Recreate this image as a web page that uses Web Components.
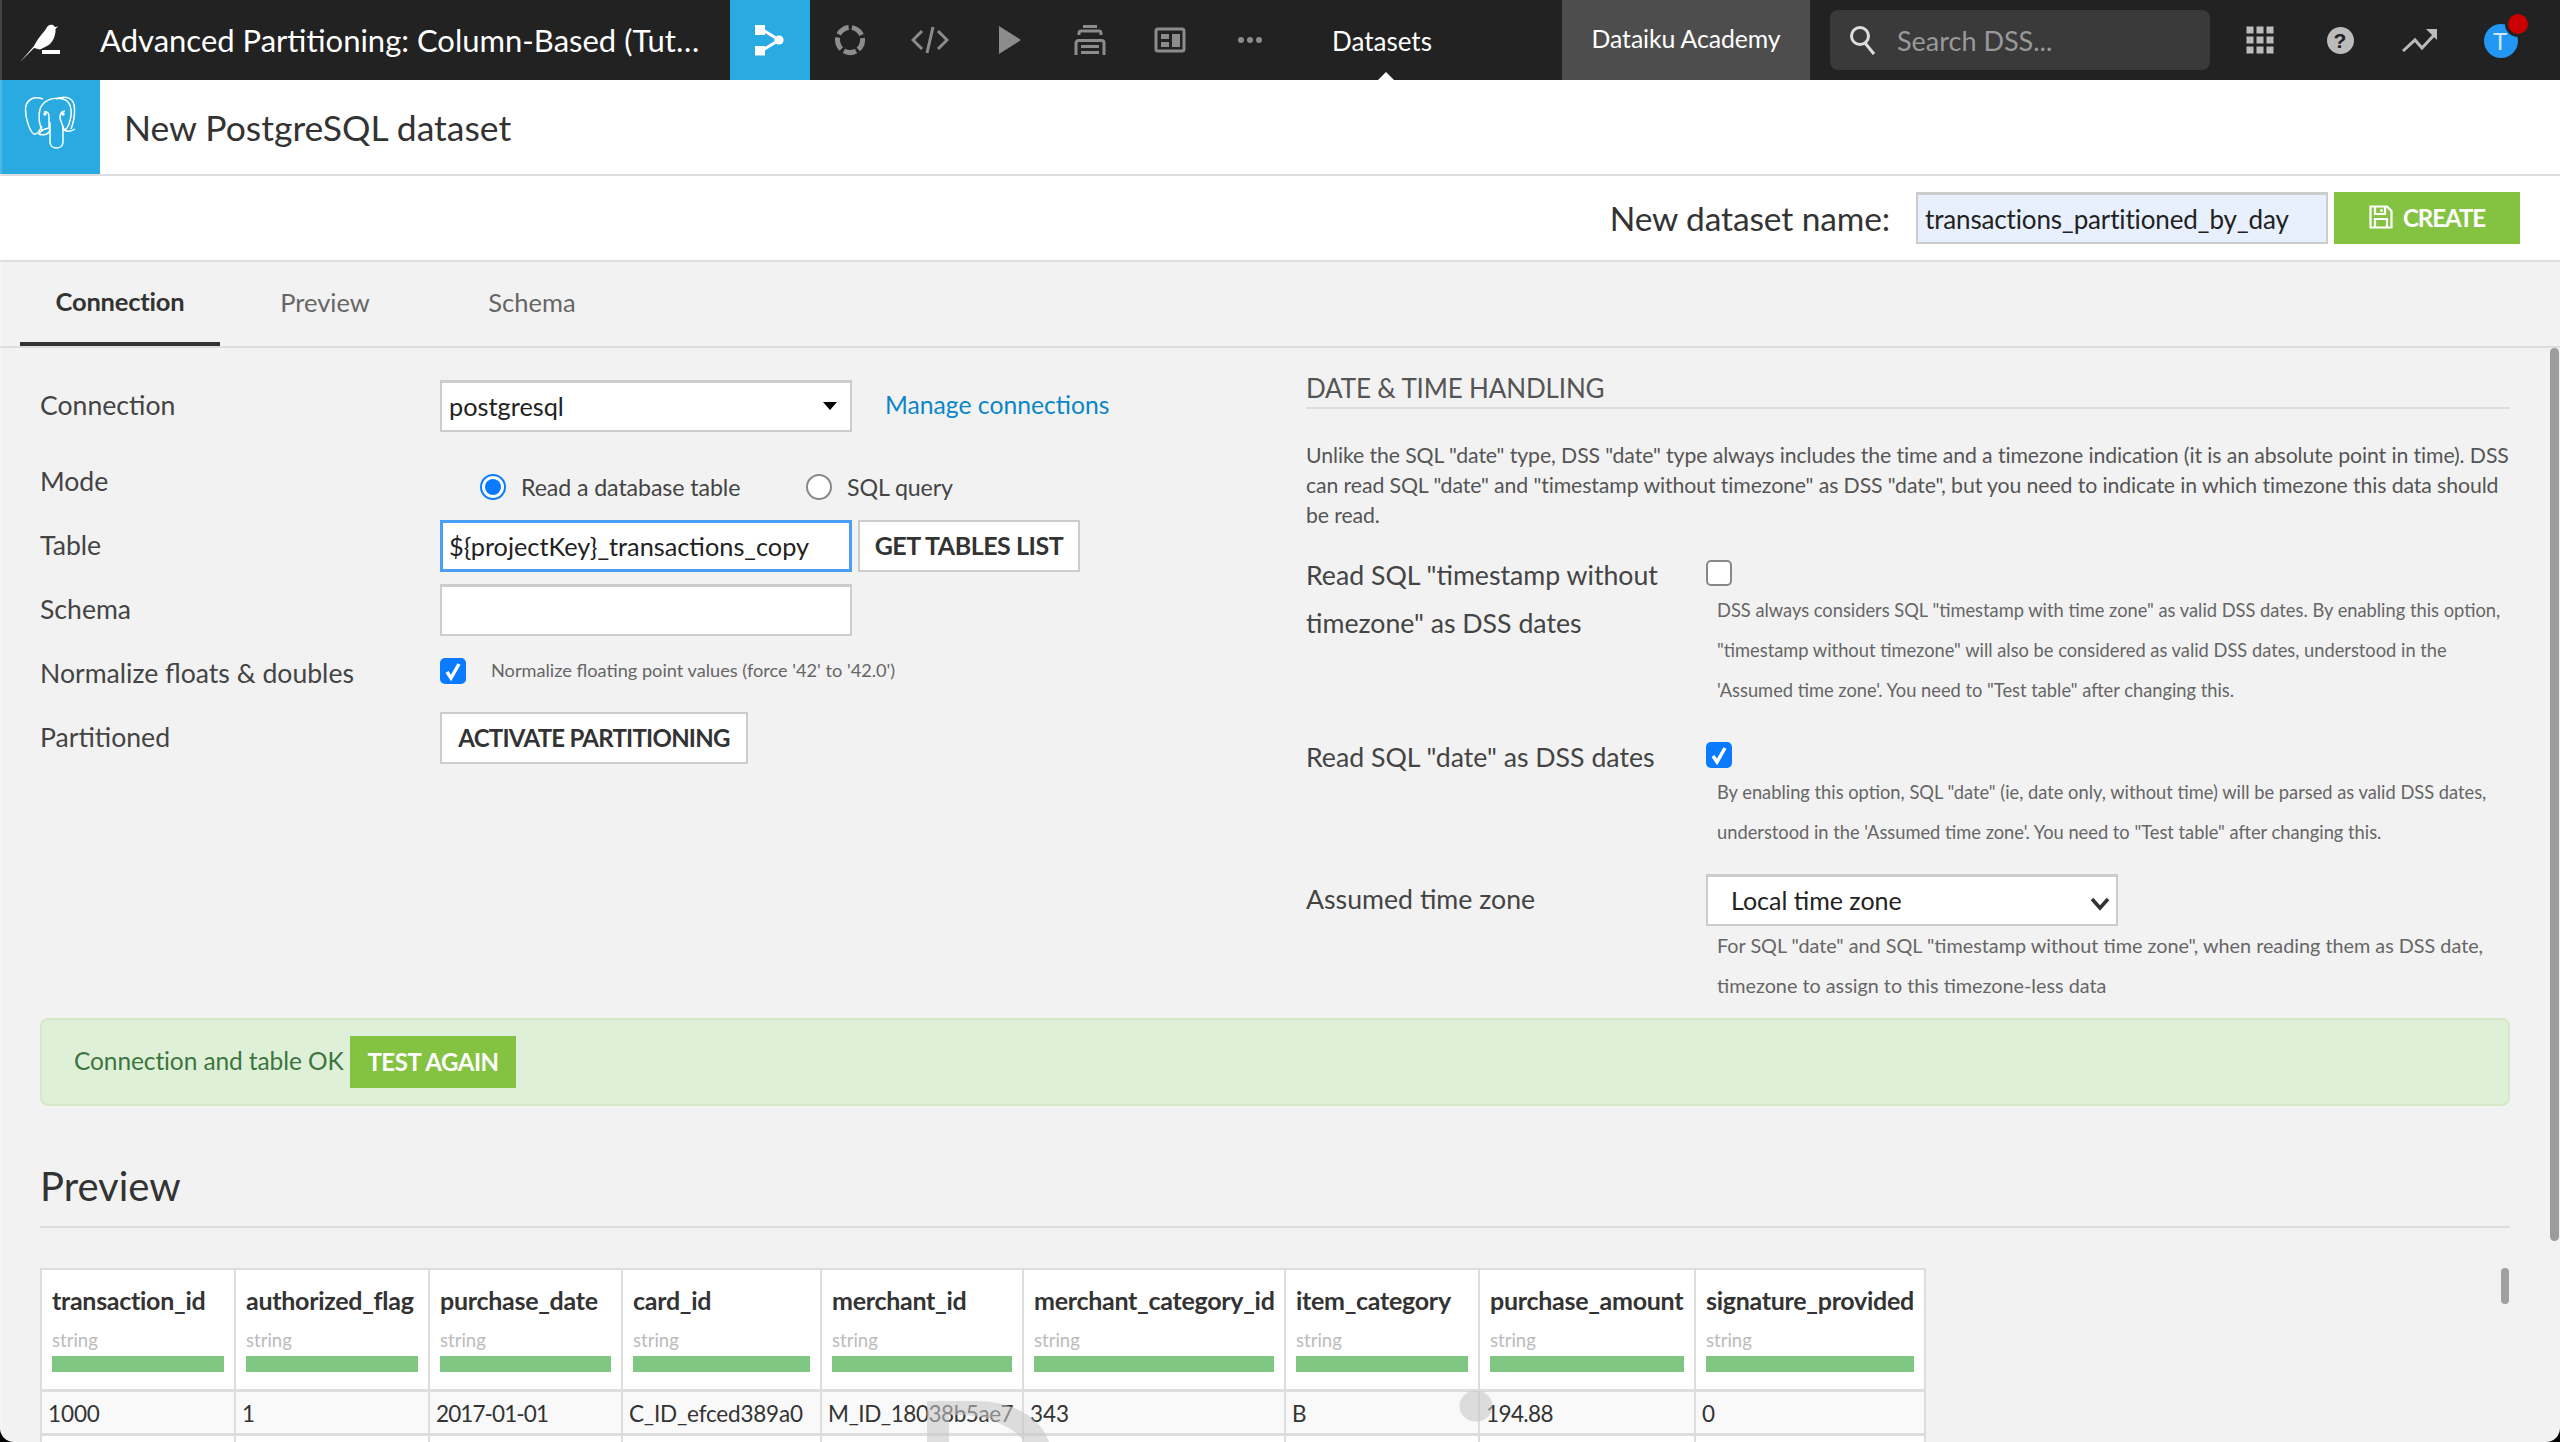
<!DOCTYPE html>
<html lang="en"><head><meta charset="utf-8"><title>New PostgreSQL dataset</title>
<style>
html,body{margin:0;padding:0;background:#000;}
body{width:2560px;height:1442px;overflow:hidden;font-family:Lato,"Liberation Sans",sans-serif;color:#333;}
</style></head><body>
<dss-app>
  <dss-topbar></dss-topbar>
  <dss-page-title>New PostgreSQL dataset</dss-page-title>
  <dss-name-bar></dss-name-bar>
  <dss-tabs></dss-tabs>
  <dss-columns>
    <dss-left-form slot="left"></dss-left-form>
    <dss-right-form slot="right"></dss-right-form>
  </dss-columns>
  <dss-alert></dss-alert>
  <dss-section-title>Preview</dss-section-title>
  <dss-preview-table></dss-preview-table>
  <dss-ghost-mark></dss-ghost-mark>
  <dss-scrollbars></dss-scrollbars>
</dss-app>
<script>
const BASE=`*,:host{box-sizing:border-box}`;
function el(name,css,html){
  customElements.define(name,class extends HTMLElement{
    connectedCallback(){
      if(this.shadowRoot)return;
      const r=this.attachShadow({mode:'open'});
      const h=typeof html==='function'?html(this):html;
      r.innerHTML=`<style>${BASE}${css}</style>${h}`;
    }
  });
}
const G='#8c8c8c';
const ICONS=[
 `<svg width="34" height="32" viewBox="0 0 34 32"><rect x="2" y="1" width="10" height="10" fill="#fff"/><rect x="2" y="22" width="10" height="9.5" fill="#fff"/><circle cx="26" cy="16" r="4.6" fill="#fff"/><path d="M10 6 26 16 10 26" fill="none" stroke="#fff" stroke-width="3"/></svg>`,
 `<svg width="32" height="32" viewBox="0 0 32 32"><circle cx="16" cy="16" r="12.5" fill="none" stroke="${G}" stroke-width="5" stroke-dasharray="12.5 3.2" transform="rotate(61.3 16 16)"/></svg>`,
 `<svg width="38" height="28" viewBox="0 0 38 28" fill="none" stroke="${G}" stroke-width="3"><path d="M11 5 2 14 11 23M27 5 36 14 27 23M22 1 16 27"/></svg>`,
 `<svg width="24" height="30" viewBox="0 0 24 30"><path d="M1 1 23 15 1 29Z" fill="${G}"/></svg>`,
 `<svg width="32" height="32" viewBox="0 0 32 32" fill="${G}"><rect x="9" y="1" width="14" height="3"/><path d="M5 11V9a2 2 0 0 1 2-2h18a2 2 0 0 1 2 2v2" fill="none" stroke="${G}" stroke-width="3"/><path d="M2 31V19a2.5 2.5 0 0 1 2.500-2.500h23a2.500 2.500 0 0 1 2.500 2.500v12" fill="none" stroke="${G}" stroke-width="3"/><rect x="7" y="21" width="18" height="3"/><rect x="7" y="27" width="18" height="3"/></svg>`,
 `<svg width="32" height="26" viewBox="0 0 32 26" fill="${G}"><rect x="2" y="2" width="28" height="22" rx="2" fill="none" stroke="${G}" stroke-width="3"/><rect x="7" y="7" width="8" height="5"/><rect x="7" y="15" width="8" height="5"/><rect x="18" y="7" width="8" height="13"/></svg>`,
 `<svg width="26" height="8" viewBox="0 0 26 8" fill="${G}"><circle cx="4" cy="4" r="3"/><circle cx="13" cy="4" r="3"/><circle cx="22" cy="4" r="3"/></svg>`
];
const Q='#bbb';
el('dss-app',`:host{display:flex;flex-direction:column;position:relative;width:2560px;height:1442px;overflow:hidden;background:#f2f2f2;border-radius:0 0 14px 14px}
 .edge{position:absolute;left:0;top:0;bottom:0;width:2px;background:rgba(255,255,255,.16)}`,`<slot></slot><div class="edge"></div>`);
el('dss-topbar',`:host{display:flex;flex:none;height:80px;background:#222;color:#fff;align-items:stretch}
 .logo{width:100px;flex:none;display:flex}
 .title{width:630px;flex:none;font-size:31px;line-height:80px;white-space:nowrap;padding-bottom:2px}
 .cell{width:80px;flex:none;display:flex;align-items:center;justify-content:center}
 .on{background:#29abe2}
 .ds{position:relative;width:192px;flex:none;font-size:26px;line-height:82px;text-align:center;padding-right:8px}
 .ds i{position:absolute;left:88px;bottom:0;border:8px solid transparent;border-top:0;border-bottom-color:#fff}
 .sp{flex:1}
 .ac{width:248px;flex:none;background:#4d4d4d;text-align:center;font-size:24.800px;line-height:78px;letter-spacing:-.1px}
 .search{width:380px;height:60px;margin:10px 10px 10px 20px;background:#3a3a3a;border-radius:8px;display:flex;align-items:center;padding-left:19px;gap:20px;color:#999;font-size:27px}
 .last{width:100px;position:relative;justify-content:flex-start;padding-left:24px}
 .av{width:34px;height:34px;border-radius:50%;background:#2196f3;color:#cfe9fc;font-size:24px;line-height:34px;text-align:center;position:relative;top:1px;padding-right:2px}
 .dot{position:absolute;left:45px;top:11px;width:26px;height:26px;border-radius:50%;background:#c00;border:3px solid #222}
 .help{width:27px;height:27px;border-radius:50%;background:${Q};color:#222;font:700 21px/27px "Liberation Sans",sans-serif;text-align:center}`,
 `<div class="logo"><svg width="100" height="80" viewBox="0 0 100 80"><path fill="#fff" d="M20 62 34 46C38 38 43 33 46 29 47 25 51 24 53 25L55 27 58 26.500 55.500 29C56 36 52 44 47 46L40 49.500 34 48Z"/><rect x="42" y="50" width="18" height="4" fill="#fff"/></svg></div>
 <div class="title">Advanced Partitioning: Column-Based (Tut…</div>
 ${ICONS.map((s,i)=>`<div class="cell ${i==0?'on':''}">${s}</div>`).join('')}
 <div class="ds">Datasets<i></i></div><div class="sp"></div>
 <div class="ac">Dataiku Academy</div>
 <div class="search"><svg width="28" height="30" viewBox="0 0 28 30" fill="none" stroke="#ddd" stroke-width="3"><circle cx="11" cy="11" r="8.500"/><path d="M16 18 25 29"/></svg><span>Search DSS...</span></div>
 <div class="cell"><svg width="28" height="28" viewBox="0 0 28 28" fill="${Q}">${[0,10,20].map(y=>[0,10,20].map(x=>`<rect x="${x+.5}" y="${y+.5}" width="7" height="7"/>`).join('')).join('')}</svg></div>
 <div class="cell"><div class="help">?</div></div>
 <div class="cell"><svg width="38" height="28" viewBox="0 0 38 28"><path d="M2 25 14 14 21 22 34 8" fill="none" stroke="${Q}" stroke-width="3"/><path d="M25 3H36V14Z" fill="${Q}"/></svg></div>
 <div class="cell last"><div class="av">T</div><div class="dot"></div></div>`);
el('dss-page-title',`:host{display:flex;flex:none;height:96px;background:#fff;border-bottom:2px solid #ddd;align-items:center}
 .tile{width:100px;height:94px;background:#29abe2;flex:none;display:flex}
 .t{margin-left:24px;font-size:35.500px;color:#333}`,
 `<div class="tile"><svg width="100" height="94" viewBox="0 80 100 94" fill="none" stroke="#fff" stroke-width="1.500"><path d="M43 99C34 96 25.500 99 25.500 110 25.500 119 30 132 34 134 37 135 40 130 42 126"/><path d="M42 130C38 122 38 109 43 104 49 97 62 97 67 101 72 106 72 115 69 124 67 129 65 131 63 128"/><path d="M56 99C64 96 74 96 74.500 108 75 116 73 124 71 129"/><path d="M50 122V142C50 150 63 150 63 142V126"/><path d="M44 112C47 111 49 113 49 116V128C44 129 40 131 39 134 44 136 49 134 50 130"/><path d="M65 111C61 111 60 114 60 118 61 122 63 126 64 130 68 132 72 131 75 129"/><circle cx="45" cy="114" r="1" fill="#fff"/><circle cx="63" cy="114" r="1" fill="#fff"/></svg></div><div class="t"><slot></slot></div>`);
el('dss-box',`:host{display:flex;align-items:center;height:52px;background:#fff;border:2px solid #ccc;border-top-width:3px;padding:0 7px 2px;font-size:25.300px;color:#222;white-space:nowrap;position:relative}
 :host([focus]){border:3px solid #4a9ff5;padding:0 6px}
 :host([auto]){background:#e8f0fe;font-size:26px;letter-spacing:-.15px;padding-bottom:0}
 :host([chev]){font-size:25px}
 i{position:absolute;right:13px;top:19px;border:7.500px solid transparent;border-bottom:0;border-top:8px solid #000}
 svg{position:absolute;right:6px;top:20px}`,
 h=>`<slot></slot>${h.hasAttribute('tri')?'<i></i>':''}${h.hasAttribute('chev')?'<svg width="20" height="14" viewBox="0 0 20 14" fill="none" stroke="#333" stroke-width="3.500"><path d="M2 2 10 11 18 2"/></svg>':''}`);
el('dss-btn',`:host{display:inline-flex;align-items:center;justify-content:center;height:52px;background:#fff;border:2px solid #ccc;padding-bottom:2px;font-size:24px;font-weight:700;color:#333;white-space:nowrap;letter-spacing:-.45px}
 :host([go]){background:#83c341;border:0;color:#fff;gap:10px}`,`<slot></slot>`);
el('dss-name-bar',`:host{display:flex;flex:none;height:86px;background:#fff;border-bottom:2px solid #ddd;align-items:center;justify-content:flex-end;padding-right:40px}
 .l{font-size:33.500px;color:#333;margin-right:26px;letter-spacing:-.12px}
 dss-box{width:412px;margin-right:6px}dss-btn{width:186px;letter-spacing:-1.050px}`,
 `<div class="l">New dataset name:</div><dss-box auto>transactions_partitioned_by_day</dss-box><dss-btn go><svg width="24" height="24" viewBox="0 0 24 24" fill="none" stroke="#fff" stroke-width="2.200"><path d="M1.500 1.500H18L22.500 6V22.500H1.500Z"/><path d="M6 1.500V9H16V1.500M12.500 4V7M6 22.500V14H18V22.500"/></svg>CREATE</dss-btn>`);
el('dss-tabs',`:host{display:flex;flex:none;height:86px;border-bottom:2px solid #ddd;background:#f2f2f2;padding-left:20px}
 div{height:84px;line-height:81px;text-align:center;font-size:25.500px;color:#666}
 .a{width:200px;border-bottom:4px solid #333;font-weight:700;color:#333;letter-spacing:-.2px;line-height:79px}
 .b{width:210px}.c{width:204px}`,`<div class="a">Connection</div><div class="b">Preview</div><div class="c">Schema</div>`);
el('dss-columns',`:host{display:flex;flex:none;gap:40px;padding:0 50px 0 40px}
 .l{width:1226px;flex:none;padding-top:32px}.r{flex:1;min-width:0}`,`<div class="l"><slot name="left"></slot></div><div class="r"><slot name="right"></slot></div>`);
el('dss-field',`:host{display:grid;grid-template-columns:400px 1fr;align-items:center;height:52px;margin-bottom:12px}
 .l{font-size:26.600px;color:#444;padding-bottom:3px;white-space:nowrap}`,
 h=>`<div class="l">${h.getAttribute('label')}</div><div style="display:flex;align-items:center"><slot></slot></div>`);
el('dss-check',`:host{display:block;width:26px;height:26px;flex:none;border-radius:5px;background:#fff;border:2px solid #888}
 :host([on]){background:#0a7bff;border:0}svg{display:block}`,
 h=>h.hasAttribute('on')?`<svg width="26" height="26" viewBox="0 0 26 26" fill="none" stroke="#fff" stroke-width="3.500"><path d="M7 14 11 20 19 6"/></svg>`:'');
el('dss-radio',`:host{display:block;width:26px;height:26px;flex:none;border-radius:50%;background:#fff;border:2px solid #888;padding:3px}
 :host([on]){border-color:#0a7bff}:host([on]) i{display:block;width:16px;height:16px;border-radius:50%;background:#0a7bff}`,`<i></i>`);
el('dss-left-form',`:host{display:block}
 .m{display:flex;align-items:center;padding:10px 0 0 40px;font-size:23.200px;color:#444;letter-spacing:-.1px}
 .m span{margin:0 0 0 15px;white-space:nowrap;padding-bottom:1px}
 .m span.f{width:219px;margin-right:66px}
 a{color:#0a86c9;font-size:24.700px;margin-left:33px;white-space:nowrap;padding-bottom:4px}
 dss-box{width:412px}
 .hint{font-size:18.200px;color:#666;margin-left:25px;padding-bottom:8px;white-space:nowrap}`,
 `<dss-field label="Connection" style="margin-bottom:24px"><dss-box tri>postgresql</dss-box><a>Manage connections</a></dss-field>
 <dss-field label="Mode"><div class="m"><dss-radio on></dss-radio><span class="f">Read a database table</span><dss-radio></dss-radio><span>SQL query</span></div></dss-field>
 <dss-field label="Table"><dss-box focus>\${projectKey}_transactions_copy</dss-box><dss-btn style="width:222px;margin-left:6px;font-size:25px">GET TABLES LIST</dss-btn></dss-field>
 <dss-field label="Schema"><dss-box></dss-box></dss-field>
 <dss-field label="Normalize floats &amp; doubles"><dss-check on style="margin-top:-6px"></dss-check><span class="hint">Normalize floating point values (force '42' to '42.0')</span></dss-field>
 <dss-field label="Partitioned"><dss-btn style="width:308px;letter-spacing:-.75px">ACTIVATE PARTITIONING</dss-btn></dss-field>`);
el('dss-date-field',`:host{display:grid;grid-template-columns:400px 1fr;align-items:start}
 .l{font-size:26.700px;line-height:48px;color:#444;padding-top:var(--lt,0)}
 .c{padding-top:var(--ct,9px)}
 .h{font-size:var(--hf,18.300px);line-height:40px;color:#666;padding-left:11px;margin-top:var(--ht,4px);white-space:nowrap}`,
 h=>`<div class="l">${h.getAttribute('label')}</div><div><div class="c"><slot name="ctl"></slot></div><div class="h"><slot></slot></div></div>`);
el('dss-right-form',`:host{display:block}
 h3{margin:0;font-weight:400;height:61px;padding-top:23px;border-bottom:2px solid #ddd;font-size:26px;line-height:35px;color:#555;letter-spacing:-.15px}
 p{margin:31px 0 21px;font-size:21.260px;line-height:30px;color:#555;letter-spacing:-.1px;white-space:nowrap}
 dss-box{width:412px;padding-left:23px}`,
 `<h3>DATE &amp; TIME HANDLING</h3>
 <p>Unlike the SQL "date" type, DSS "date" type always includes the time and a timezone indication (it is an absolute point in time). DSS<br>can read SQL "date" and "timestamp without timezone" as DSS "date", but you need to indicate in which timezone this data should<br>be read.</p>
 <dss-date-field label='Read SQL "timestamp without timezone" as DSS dates'><dss-check slot="ctl"></dss-check>DSS always considers SQL "timestamp with time zone" as valid DSS dates. By enabling this option,<br>"timestamp without timezone" will also be considered as valid DSS dates, understood in the<br>'Assumed time zone'. You need to "Test table" after changing this.</dss-date-field>
 <dss-date-field label='Read SQL "date" as DSS dates' style="margin-top:23px"><dss-check slot="ctl" on></dss-check>By enabling this option, SQL "date" (ie, date only, without time) will be parsed as valid DSS dates,<br>understood in the 'Assumed time zone'. You need to "Test table" after changing this.</dss-date-field>
 <dss-date-field label="Assumed time zone" style="margin:22px 0 13px;--lt:1px;--ct:0;--ht:-1px;--hf:19.800px"><dss-box slot="ctl" chev>Local time zone</dss-box>For SQL "date" and SQL "timestamp without time zone", when reading them as DSS date,<br>timezone to assign to this timezone-less data</dss-date-field>`);
el('dss-alert',`:host{display:flex;flex:none;align-items:center;height:88px;margin:0 50px 0 40px;background:#dff0d8;border:2px solid #d6e9c6;border-radius:8px;padding-left:32px;color:#3c763d;font-size:24.500px;letter-spacing:-.1px}
 span{padding-bottom:4px;width:276px;white-space:nowrap}dss-btn{width:166px}`,
 `<span>Connection and table OK</span><dss-btn go>TEST AGAIN</dss-btn>`);
el('dss-section-title',`:host{display:block;flex:none;margin:55px 50px 0 40px;height:67px;border-bottom:2px solid #ddd;font-size:40px;line-height:50px;color:#333}`,`<slot></slot>`);
const COLS=[194,194,193,199,202,262,194,216,230];
const HEAD=['transaction_id','authorized_flag','purchase_date','card_id','merchant_id','merchant_category_id','item_category','purchase_amount','signature_provided'];
const ROW=[['1000'],['1'],['2017-01-01',-.9],['C_ID_efced389a0',-.2],['M_ID_18038b5ae7',-.45],['343'],['B'],['194.88',-.6],['0']];
el('dss-preview-table',`:host{display:grid;flex:none;width:1886px;margin:40px 0 0 40px;grid-template-columns:${COLS.map(c=>c+'px').join(' ')};border-top:2px solid #ddd;border-left:2px solid #ddd}
 .h{height:122px;background:#fff;border-right:2px solid #ddd;border-bottom:3px solid #ddd;padding:14px 10px 0}
 .n{font-size:25px;line-height:32px;font-weight:700;color:#333;white-space:nowrap;letter-spacing:-.28px}
 .s{font-size:18.500px;line-height:24px;color:#bbb;margin-top:12px}
 .b{height:16px;background:#81c784;margin-top:4px}
 .c{height:44px;background:#f9f9f9;border-right:2px solid #ddd;border-bottom:3px solid #ddd;padding-left:6px;font-size:22.500px;line-height:43px;color:#333;white-space:nowrap;overflow:hidden}
 .e{height:40px;background:#fff;border-right:2px solid #ddd}`,
 HEAD.map(n=>`<div class="h"><div class="n">${n}</div><div class="s">string</div><div class="b"></div></div>`).join('')+ROW.map(([t,s])=>`<div class="c" style="letter-spacing:${s||-.1}px">${t}</div>`).join('')+COLS.map(()=>`<div class="e"></div>`).join(''));
el('dss-ghost-mark',`:host{display:block;position:absolute;left:920px;top:1391px;width:580px;height:51px;pointer-events:none}svg{display:block}`,
 `<svg width="580" height="51" viewBox="920 1391 580 51" fill="rgb(199,199,199)" fill-opacity=".58"><path d="M927 1401H975C1010 1401 1040 1415 1049 1442H1024C1018 1430 990 1415 960 1415H949V1442H927Z"/><ellipse cx="1476" cy="1406" rx="16.500" ry="15.500"/></svg>`);
el('dss-scrollbars',`:host{display:block;position:absolute;inset:0;pointer-events:none}
 .a{position:absolute;left:2550px;top:348px;width:9px;height:893px;border-radius:5px;background:#9c9c9c}
 .b{position:absolute;left:2501px;top:1268px;width:8px;height:36px;border-radius:4px;background:#a0a0a0}`,`<div class="a"></div><div class="b"></div>`);
</script>
</body></html>
